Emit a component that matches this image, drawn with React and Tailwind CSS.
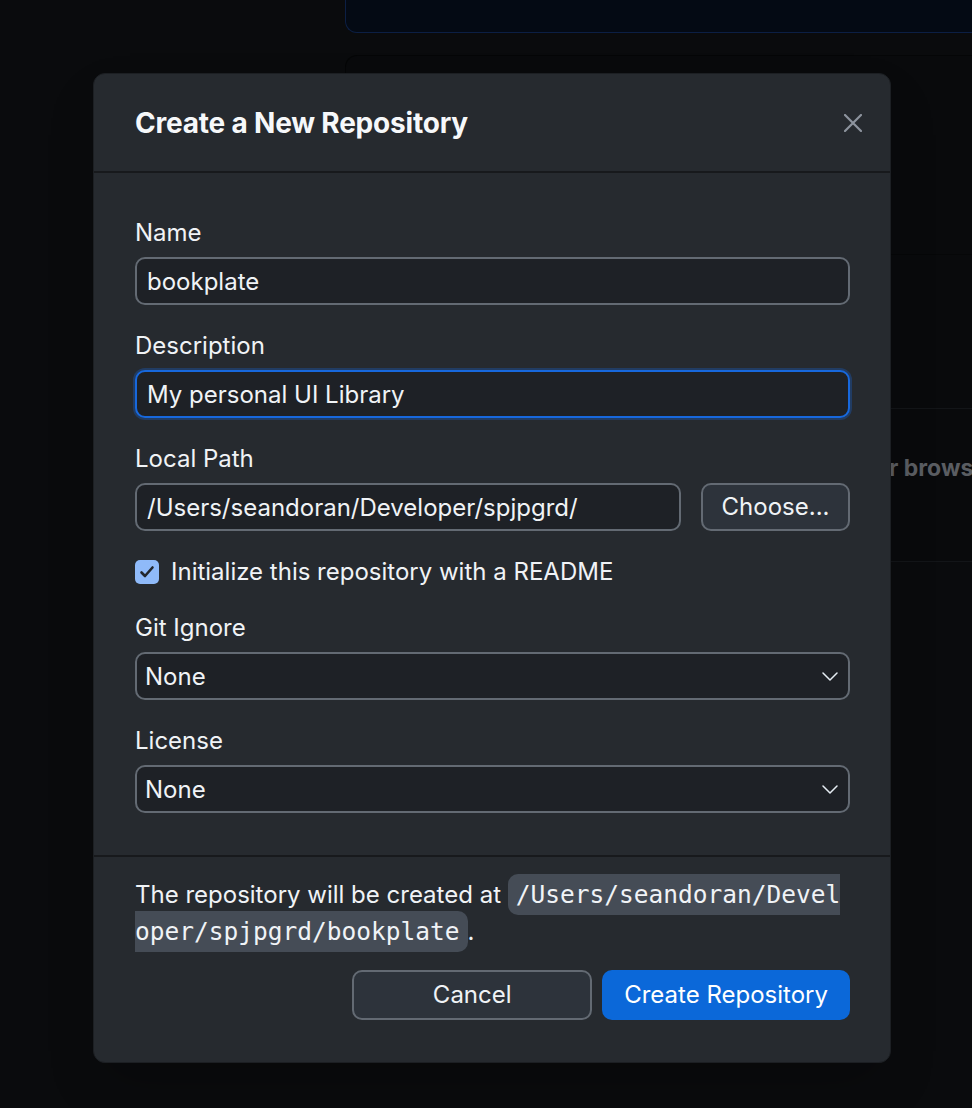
import { useState } from 'react';

const sans = { fontFamily: 'Inter, "Noto Sans", sans-serif' };

function Chevron() {
  return (
    <svg width="16" height="9" viewBox="0 0 16 9" fill="none" className="mr-[2px] text-[#e6edf3]">
      <polyline points="1,1 8,8 15,1" stroke="currentColor" strokeWidth="1.5" strokeLinecap="round" strokeLinejoin="round" />
    </svg>
  );
}

function Field({ label, children }) {
  return (
    <div className="flex flex-col gap-[9px]">
      <label className="text-[24px] leading-[30px] text-[#f0f3f6]">{label}</label>
      {children}
    </div>
  );
}

function TextInput({ value, focused, className = '' }) {
  return (
    <div
      className={`
        flex h-[48px] items-center rounded-[10px] border-2 bg-[#1e2126] px-[10px] pt-[1px] text-[24px] text-[#f0f3f6]
        ${focused ? 'border-[#1768dd] ring-2 ring-[#1768dd]/30' : 'border-[#636a73]'}
        ${className}
      `}
    >
      {value}
    </div>
  );
}

function Select({ value }) {
  return (
    <div className="flex h-[48px] items-center justify-between rounded-[10px] border-2 border-[#636a73] bg-[#1e2126] pl-[8px] pr-[8px] pt-[1px] text-[24px] text-[#f0f3f6]">
      <span>{value}</span>
      <Chevron />
    </div>
  );
}

function Background() {
  return (
    <div className="flex flex-col pl-[345px]">
      {/* Top banner */}
      <div className="h-[33px] rounded-bl-[12px] border-b border-l border-[#0c1f44] bg-[#040a14]" />

      {/* List card */}
      <div className="mt-[22px] flex flex-col rounded-tl-[12px] border-l border-t border-[#050607] bg-[#090a0c]">
        <div className="h-[199px] border-b border-[#060708]" />
        <div className="h-[154px] border-b border-[#131518]" />
        <div className="h-[153px] overflow-hidden border-b border-[#131518] pl-[543px] pt-[45px]">
          <span className="whitespace-nowrap text-[23px] font-bold leading-[28px] text-[#5a5d62]" style={sans}>
            r brows
          </span>
        </div>
      </div>
    </div>
  );
}

export default function App() {
  const [readme, setReadme] = useState(true);

  return (
    <div className="relative min-h-[1108px] overflow-hidden bg-[#0a0b0d]" style={sans}>
      <Background />

      {/* Modal */}
      <div className="absolute left-[93px] top-[73px] w-[798px] rounded-[12px] border border-[#1c1f23] bg-[#262a2f] shadow-2xl">
        <header className="flex h-[99px] items-center justify-between border-b-2 border-[#17191c] pl-[41px] pr-[28px]">
          <h1 className="pt-[1px] text-[28px] font-bold tracking-[-0.2px] text-[#f6f8fa]">Create a New Repository</h1>
          <button aria-label="Close" className="text-[#8d949e]">
            <svg width="18" height="18" viewBox="0 0 18 18" fill="none">
              <path d="M1 1L17 17M17 1L1 17" stroke="currentColor" strokeWidth="2.2" strokeLinecap="round" />
            </svg>
          </button>
        </header>

        <div className="flex flex-col gap-[26px] pb-[42px] pl-[41px] pr-[40px] pt-[45px]">
          <Field label="Name">
            <TextInput value="bookplate" />
          </Field>

          <Field label="Description">
            <TextInput value="My personal UI Library" focused />
          </Field>

          <Field label="Local Path">
            <div className="flex gap-[20px]">
              <TextInput value="/Users/seandoran/Developer/spjpgrd/" className="flex-1" />
              <button className="h-[48px] w-[149px] rounded-[10px] border-2 border-[#636a73] bg-[#2d333b] text-[24px] text-[#f0f3f6]">
                Choose...
              </button>
            </div>
          </Field>

          <label className="flex h-[30px] items-center gap-[12px] text-[24px] text-[#f0f3f6]">
            <button
              onClick={() => setReadme(!readme)}
              className="flex h-[24px] w-[24px] items-center justify-center rounded-[5px] bg-[#8fbaf9]"
            >
              {readme && (
                <svg width="16" height="16" viewBox="0 0 16 16" fill="none">
                  <path d="M2.5 8.5L6 12L13.5 3.5" stroke="#22262c" strokeWidth="2.6" strokeLinecap="round" strokeLinejoin="round" />
                </svg>
              )}
            </button>
            Initialize this repository with a README
          </label>

          <Field label="Git Ignore">
            <Select value="None" />
          </Field>

          <Field label="License">
            <Select value="None" />
          </Field>
        </div>

        <footer className="flex flex-col border-t-2 border-[#17191c] pb-[42px] pl-[41px] pr-[40px] pt-[19px]">
          <p className="text-[24px] leading-[37px] text-[#f0f3f6]">
            The repository will be created at{' '}
            <code
              className="rounded-[10px] bg-[#454c56] px-[8px] py-[6px] text-[24.5px] text-[#f0f3f6]"
              style={{ fontFamily: '"DejaVu Sans Mono", "Liberation Mono", monospace' }}
            >
              /Users/seandoran/Devel
              <br />
              oper/spjpgrd/bookplate
            </code>
            .
          </p>

          <div className="mt-[20px] flex justify-end gap-[10px]">
            <button className="h-[50px] w-[240px] rounded-[10px] border-2 border-[#636a73] bg-[#2d333b] text-[24px] text-[#f0f3f6]">
              Cancel
            </button>
            <button className="h-[50px] rounded-[10px] bg-[#0b68d9] px-[22px] text-[24px] text-white">
              Create Repository
            </button>
          </div>
        </footer>
      </div>
    </div>
  );
}
